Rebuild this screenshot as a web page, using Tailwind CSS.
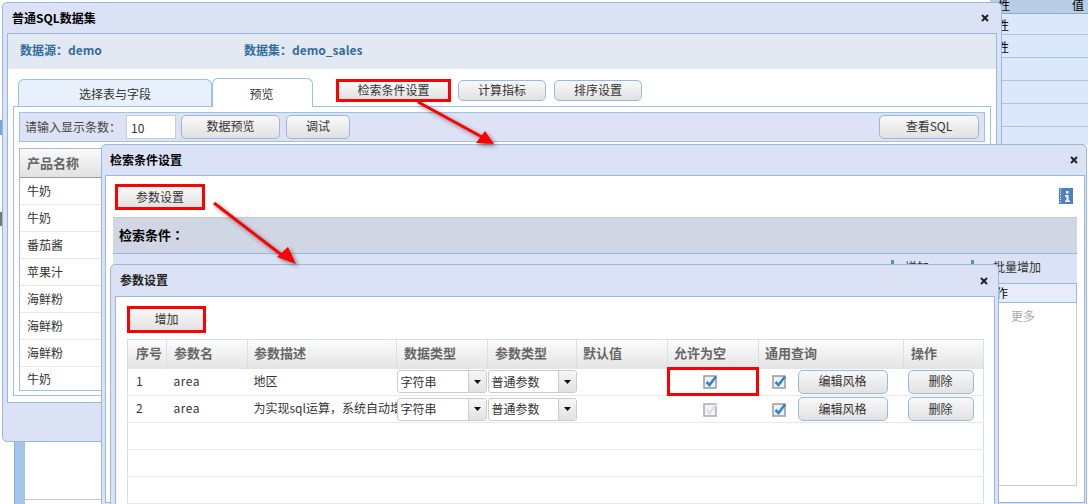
<!DOCTYPE html>
<html lang="zh-CN">
<head>
    <meta charset="UTF-8">
    <title>普通SQL数据集</title>
    <script src="https://cdn.jsdelivr.net/npm/@tailwindcss/browser@4"></script>
</head>
<body class="relative w-[1088px] h-[504px] overflow-hidden bg-white text-[12px] leading-none text-[#333] font-['Noto_Sans_CJK_SC',sans-serif]">

    <!-- Desktop behind the windows -->
    <div class="absolute right-0 top-0 w-[98px] h-[145px] bg-[#dbe8fb]">
        <div class="h-[14px] flex justify-between items-end pl-[8px] pr-[4px] pb-[2px] bg-[#b8cde6] border-b border-[#8fa8c8] text-black"><span>性</span><span>值</span></div>
        <div class="h-[21px] flex items-center pl-[7px] pt-[2px] border-b border-[#a9c3e4] text-black">性</div>
        <div class="h-[23px] flex items-center pl-[7px] pt-[2px] border-b border-[#a9c3e4] text-black">性</div>
        <div class="h-[23px] border-b border-[#a9c3e4]"></div>
        <div class="h-[23px] border-b border-[#a9c3e4]"></div>
        <div class="h-[23px] border-b border-[#a9c3e4]"></div>
    </div>
    <div class="absolute left-[14px] top-[430px] w-[11px] h-[74px] bg-[#a4c4e8] border-l border-[#8aaad0]"></div>
    <div class="absolute left-[25px] top-[499px] w-[80px] h-[5px] border-t border-[#c8c8c8]"></div>
    <div class="absolute left-0 top-[120px] w-[3px] h-[15px] bg-[#7aa5d8]"></div>
    <div class="absolute left-0 top-[212px] w-[3px] h-[14px] bg-[#777]"></div>

    <!-- Window: 普通SQL数据集 -->
    <section class="absolute left-[2px] top-[2px] w-[1000px] h-[440px] flex flex-col bg-[#dce2f5] border border-[#99b8dc] rounded-[5px]">
        <header class="h-[30px] shrink-0 flex items-center justify-between pl-[9px] pr-[12px]">
            <h1 class="font-bold text-black">普通SQL数据集</h1>
            <svg class="w-[8px] h-[8px]" viewBox="0 0 8 8"><path d="M1 1L7 7M7 1L1 7" stroke="#222" stroke-width="2"/></svg>
        </header>
        <div class="mx-[4px] h-[370px] shrink-0 flex flex-col bg-white border border-[#99b8dc]">
            <div class="h-[35px] shrink-0 flex items-center pl-[12px] pb-[3px] bg-[#e2e9f2] font-bold text-[#336c9c]">
                <span class="w-[224px]">数据源<span class="font-['Noto_Sans_CJK_TC']">：</span>demo</span>
                <span>数据集<span class="font-['Noto_Sans_CJK_TC']">：</span>demo_sales</span>
            </div>
            <div class="h-[37px] shrink-0 flex items-end pl-[10px]">
                <div class="w-[194px] h-[27px] flex items-center justify-center pt-[1px] bg-[#e8f1fb] border border-b-0 border-[#9cc0e6] rounded-t-[6px]">选择表与字段</div>
                <div class="w-[101px] h-[29px] flex items-center justify-center pt-[1px] pr-[2px] bg-white border border-b-0 border-[#9cc0e6] rounded-t-[6px] relative top-[1px] z-10">预览</div>
                <div class="flex items-center self-start mt-[10px] ml-[23px]">
                    <button class="w-[115px] h-[23px] pb-[1px] border-[3px] border-[#f00] bg-linear-to-b from-[#f8f8f8] to-[#e2e2e2]">检索条件设置</button>
                    <button class="ml-[7px] w-[88px] h-[21px] pb-[1px] border border-[#9ab8dc] rounded-[5px] bg-linear-to-b from-[#f8f8f8] to-[#e2e2e2]">计算指标</button>
                    <button class="ml-[8px] w-[88px] h-[21px] pb-[1px] border border-[#9ab8dc] rounded-[5px] bg-linear-to-b from-[#f8f8f8] to-[#e2e2e2]">排序设置</button>
                </div>
            </div>
            <div class="mx-[5px] h-[290px] shrink-0 px-[5px] pt-[5px] border border-[#9cc0e6] bg-white">
                <div class="h-[30px] flex items-center pl-[5px] pr-[5px] gap-[5px] bg-[#dde2f5] border border-[#9cc0e6]">
                    <span class="w-[96px] pb-[1px] whitespace-nowrap text-[#444]">请输入显示条数<span class="font-['Noto_Sans_CJK_TC']">：</span></span>
                    <input class="w-[50px] h-[24px] pl-[4px] bg-white border border-[#ccc] text-[#333] text-[12px]" value="10">
                    <button class="w-[99px] h-[24px] pb-[2px] border border-[#9ab8dc] rounded-[5px] bg-linear-to-b from-[#f8f8f8] to-[#e2e2e2]">数据预览</button>
                    <button class="ml-[1px] w-[64px] h-[24px] pb-[2px] border border-[#9ab8dc] rounded-[5px] bg-linear-to-b from-[#f8f8f8] to-[#e2e2e2]">调试</button>
                    <button class="ml-auto w-[100px] h-[24px] pb-[2px] border border-[#9ab8dc] rounded-[5px] bg-linear-to-b from-[#f8f8f8] to-[#e2e2e2]">查看SQL</button>
                </div>
                <div class="mt-[6px] h-[243px] w-[200px] border border-[#a9bcd4]">
                    <div class="h-[29px] flex items-center pl-[7px] pb-[2px] bg-linear-to-b from-[#fafafa] to-[#e2e2e2] border-b border-[#999] text-[13px] font-bold text-[#666]">产品名称</div>
                    <div class="h-[27px] flex items-center pl-[7px] border-b border-[#e8e8e8]">牛奶</div>
                    <div class="h-[27px] flex items-center pl-[7px] border-b border-[#e8e8e8]">牛奶</div>
                    <div class="h-[27px] flex items-center pl-[7px] border-b border-[#e8e8e8]">番茄酱</div>
                    <div class="h-[27px] flex items-center pl-[7px] border-b border-[#e8e8e8]">苹果汁</div>
                    <div class="h-[27px] flex items-center pl-[7px] border-b border-[#e8e8e8]">海鲜粉</div>
                    <div class="h-[27px] flex items-center pl-[7px] border-b border-[#e8e8e8]">海鲜粉</div>
                    <div class="h-[27px] flex items-center pl-[7px] border-b border-[#e8e8e8]">海鲜粉</div>
                    <div class="h-[24px] flex items-center pl-[7px]">牛奶</div>
                </div>
            </div>
        </div>
    </section>

    <!-- Window: 检索条件设置 -->
    <section class="absolute left-[101px] top-[144px] w-[986px] h-[370px] flex flex-col bg-[#dce2f5] border border-[#99b8dc] rounded-t-[5px]">
        <header class="h-[30px] shrink-0 flex items-center justify-between pl-[8px] pr-[8px]">
            <h2 class="font-bold text-black">检索条件设置</h2>
            <svg class="w-[8px] h-[8px]" viewBox="0 0 8 8"><path d="M1 1L7 7M7 1L1 7" stroke="#222" stroke-width="2"/></svg>
        </header>
        <div class="ml-[3px] w-[980px] h-[328px] shrink-0 flex flex-col bg-white border border-[#99b8dc] pl-[7px] pr-[7px]">
            <div class="h-[41px] shrink-0 flex items-start justify-between pt-[8px] pl-[2px] pr-[4px]">
                <button class="w-[90px] h-[26px] border-[3px] border-[#f00] bg-linear-to-b from-[#f8f8f8] to-[#e2e2e2]">参数设置</button>
                <svg class="mt-[4px] w-[14px] h-[16px]" viewBox="0 0 14 16">
                    <rect width="14" height="16" fill="#4f81bd"/>
                    <path d="M1.5 1V15" stroke="#fff" stroke-dasharray="1 1.5"/>
                    <rect x="7" y="3" width="2.5" height="2.5" fill="#fff"/>
                    <path d="M6 7H9.5V12.5H11V14H6V12.5H7.5V8.5H6Z" fill="#fff"/>
                </svg>
            </div>
            <div class="h-[36px] shrink-0 flex items-center pl-[6px] pb-[3px] bg-[#d0d6e3] border-t border-[#c8c8c8] font-bold text-[13px] text-black">检索条件<span class="font-['Noto_Sans_CJK_TC']">：</span></div>
            <div class="h-[30px] shrink-0 flex items-center justify-end pr-[36px] pb-[3px] gap-[42px] bg-[#dce2f5] border-t border-[#99b8dc] text-[#333]">
                <span class="flex items-center gap-[11px]"><i class="w-[3px] h-[14px] bg-[#4f9f7f]"></i>增加</span>
                <span class="flex items-center gap-[19px]"><i class="w-[3px] h-[14px] bg-[#4f9f7f]"></i>批量增加</span>
            </div>
            <div class="h-[20px] shrink-0 flex items-center pl-[870px] bg-[#e6ecfa] border border-[#99b8dc] text-black">操作</div>
            <div class="h-[183px] shrink-0 pl-[897px] pt-[7px] border-x border-b border-[#ccc] text-[#aaa]">更多</div>
        </div>
    </section>

    <!-- Window: 参数设置 -->
    <section class="absolute left-[110px] top-[264px] w-[889px] h-[260px] flex flex-col bg-[#dce2f5] border border-[#99b8dc] rounded-t-[5px]">
        <header class="h-[31px] shrink-0 flex items-center justify-between pl-[9px] pr-[10px]">
            <h2 class="pb-[1px] font-bold text-[#222]">参数设置</h2>
            <svg class="w-[8px] h-[8px]" viewBox="0 0 8 8"><path d="M1 1L7 7M7 1L1 7" stroke="#222" stroke-width="2"/></svg>
        </header>
        <div class="ml-[4px] w-[880px] flex-1 bg-white border border-[#99b8dc] pl-[11px]">
            <button class="block mt-[9px] w-[79px] h-[27px] pb-[1px] border-[3px] border-[#f00] bg-linear-to-b from-[#f8f8f8] to-[#e2e2e2]">增加</button>
            <table class="mt-[6px] w-[856px] table-fixed border-collapse border border-[#d5dfee]">
                <colgroup>
                    <col class="w-[39px]"><col class="w-[81px]"><col class="w-[149px]"><col class="w-[91px]"><col class="w-[89px]"><col class="w-[91px]"><col class="w-[91px]"><col class="w-[145px]"><col class="w-[80px]">
                </colgroup>
                <thead>
                    <tr class="h-[29px] bg-linear-to-b from-[#fcfcfc] to-[#e4e4e4] text-[13px] font-bold text-[#666] text-left">
                        <th class="pl-[8px] pb-[3px] font-bold border-r border-[#d5dfee]">序号</th>
                        <th class="pl-[7px] pb-[3px] font-bold border-r border-[#d5dfee]">参数名</th>
                        <th class="pl-[6px] pb-[3px] font-bold border-r border-[#d5dfee]">参数描述</th>
                        <th class="pl-[7px] pb-[3px] font-bold border-r border-[#d5dfee]">数据类型</th>
                        <th class="pl-[7px] pb-[3px] font-bold border-r border-[#d5dfee]">参数类型</th>
                        <th class="pl-[6px] pb-[3px] font-bold border-r border-[#d5dfee]">默认值</th>
                        <th class="pl-[6px] pb-[3px] font-bold border-r border-[#d5dfee]">允许为空</th>
                        <th class="pl-[6px] pb-[3px] font-bold border-r border-[#d5dfee]">通用查询</th>
                        <th class="pl-[7px] pb-[3px] font-bold">操作</th>
                    </tr>
                </thead>
                <tbody>
                    <tr class="h-[27px] border-b border-[#e8e8e8]">
                        <td class="pl-[8px] pb-[2px]">1</td>
                        <td class="pl-[7px] pb-[2px] tracking-[0.5px]">area</td>
                        <td class="pl-[6px] pb-[2px]">地区</td>
                        <td>
                            <div class="flex h-[23px] w-[90px] border border-[#ccc] rounded-[3px]">
                                <span class="flex-1 flex items-center pl-[3px]">字符串</span>
                                <span class="w-[18px] flex items-center justify-center border-l border-[#ccc] rounded-r-[3px] bg-linear-to-b from-[#f6f6f6] to-[#e2e2e2]"><svg class="w-[7px] h-[4px]" viewBox="0 0 7 4"><path d="M0 0H7L3.5 4Z" fill="#111"/></svg></span>
                            </div>
                        </td>
                        <td>
                            <div class="flex h-[23px] w-[89px] border border-[#ccc] rounded-[3px]">
                                <span class="flex-1 flex items-center pl-[3px]">普通参数</span>
                                <span class="w-[18px] flex items-center justify-center border-l border-[#ccc] rounded-r-[3px] bg-linear-to-b from-[#f6f6f6] to-[#e2e2e2]"><svg class="w-[7px] h-[4px]" viewBox="0 0 7 4"><path d="M0 0H7L3.5 4Z" fill="#111"/></svg></span>
                            </div>
                        </td>
                        <td></td>
                        <td>
                            <svg class="ml-[35px] w-[15px] h-[15px]" viewBox="0 0 15 15"><rect x="1" y="2" width="12" height="12" fill="#eef2f6" stroke="#999" stroke-width="1.5"/><path d="M3.5 8L6.5 11L13 2.5" fill="none" stroke="#2b85d0" stroke-width="2.5"/></svg>
                        </td>
                        <td>
                            <div class="flex items-center pl-[13px] gap-[11px]">
                                <svg class="w-[15px] h-[15px]" viewBox="0 0 15 15"><rect x="1" y="2" width="12" height="12" fill="#eef2f6" stroke="#999" stroke-width="1.5"/><path d="M3.5 8L6.5 11L13 2.5" fill="none" stroke="#2b85d0" stroke-width="2.5"/></svg>
                                <button class="w-[90px] h-[24px] pb-[1px] border border-[#9ab8dc] rounded-[5px] bg-linear-to-b from-[#f8f8f8] to-[#e2e2e2]">编辑风格</button>
                            </div>
                        </td>
                        <td class="pl-[4px]"><button class="block w-[66px] h-[24px] pb-[1px] border border-[#9ab8dc] rounded-[5px] bg-linear-to-b from-[#f8f8f8] to-[#e2e2e2]">删除</button></td>
                    </tr>
                    <tr class="h-[27px] border-b border-[#e8e8e8]">
                        <td class="pl-[8px] pb-[2px]">2</td>
                        <td class="pl-[7px] pb-[2px] tracking-[0.5px]">area</td>
                        <td class="pl-[6px] pb-[2px] overflow-hidden whitespace-nowrap">为实现sql运算<span class="font-['Noto_Sans_CJK_TC']">，</span>系统自动增加的参数</td>
                        <td>
                            <div class="flex h-[23px] w-[90px] border border-[#ccc] rounded-[3px]">
                                <span class="flex-1 flex items-center pl-[3px]">字符串</span>
                                <span class="w-[18px] flex items-center justify-center border-l border-[#ccc] rounded-r-[3px] bg-linear-to-b from-[#f6f6f6] to-[#e2e2e2]"><svg class="w-[7px] h-[4px]" viewBox="0 0 7 4"><path d="M0 0H7L3.5 4Z" fill="#111"/></svg></span>
                            </div>
                        </td>
                        <td>
                            <div class="flex h-[23px] w-[89px] border border-[#ccc] rounded-[3px]">
                                <span class="flex-1 flex items-center pl-[3px]">普通参数</span>
                                <span class="w-[18px] flex items-center justify-center border-l border-[#ccc] rounded-r-[3px] bg-linear-to-b from-[#f6f6f6] to-[#e2e2e2]"><svg class="w-[7px] h-[4px]" viewBox="0 0 7 4"><path d="M0 0H7L3.5 4Z" fill="#111"/></svg></span>
                            </div>
                        </td>
                        <td></td>
                        <td>
                            <svg class="ml-[35px] w-[15px] h-[15px]" viewBox="0 0 15 15"><rect x="1" y="2" width="12" height="12" fill="#f4f4f4" stroke="#aaa" stroke-width="1.5"/><path d="M3.5 8L6.5 11L13 2.5" fill="none" stroke="#d8e2ea" stroke-width="2.5"/></svg>
                        </td>
                        <td>
                            <div class="flex items-center pl-[13px] gap-[11px]">
                                <svg class="w-[15px] h-[15px]" viewBox="0 0 15 15"><rect x="1" y="2" width="12" height="12" fill="#eef2f6" stroke="#999" stroke-width="1.5"/><path d="M3.5 8L6.5 11L13 2.5" fill="none" stroke="#2b85d0" stroke-width="2.5"/></svg>
                                <button class="w-[90px] h-[24px] pb-[1px] border border-[#9ab8dc] rounded-[5px] bg-linear-to-b from-[#f8f8f8] to-[#e2e2e2]">编辑风格</button>
                            </div>
                        </td>
                        <td class="pl-[4px]"><button class="block w-[66px] h-[24px] pb-[1px] border border-[#9ab8dc] rounded-[5px] bg-linear-to-b from-[#f8f8f8] to-[#e2e2e2]">删除</button></td>
                    </tr>
                    <tr class="h-[27px] border-b border-[#e8e8e8]"><td colspan="9"></td></tr>
                    <tr class="h-[27px] border-b border-[#e8e8e8]"><td colspan="9"></td></tr>
                    <tr class="h-[27px] border-b border-[#e8e8e8]"><td colspan="9"></td></tr>
                </tbody>
            </table>
        </div>
    </section>

    <!-- Annotations drawn over the screenshot -->
    <div class="absolute left-[667px] top-[367px] w-[92px] h-[29px] border-[3px] border-[#f00]"></div>
    <svg class="absolute left-0 top-0 w-[1088px] h-[504px] pointer-events-none drop-shadow-[2px_2px_2px_rgba(0,0,0,0.45)]" viewBox="0 0 1088 504">
        <path d="M418 102L482 137" stroke="#f00" stroke-width="3"/>
        <polygon points="494,144 476,143 485,131" fill="#f00"/>
        <path d="M214 203L283 256" stroke="#f00" stroke-width="3"/>
        <polygon points="296,264 277,257 288,247" fill="#f00"/>
    </svg>
</body>
</html>
